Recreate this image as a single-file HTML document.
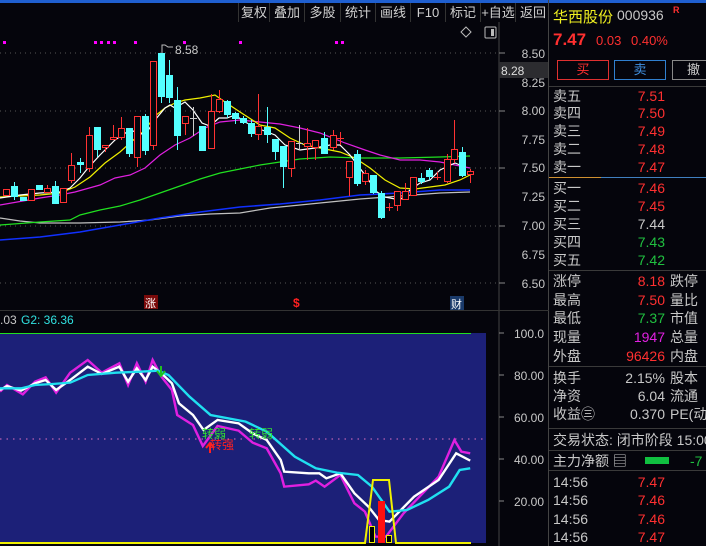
<!DOCTYPE html>
<html><head><meta charset="utf-8"><style>
*{margin:0;padding:0;box-sizing:border-box}
body{width:706px;height:546px;background:#05050c;overflow:hidden;position:relative;font-family:"Liberation Sans","Noto Sans CJK SC",sans-serif;color:#c8c8c8}
.a{position:absolute;white-space:nowrap}
.tb{position:absolute;top:3px;height:19px;font-size:13px;line-height:19px;color:#d0d0d0;text-align:center;border-left:1px solid #333}
.r{color:#ff3030}.g{color:#20c040}.w{color:#c8c8c8}.m{color:#e020e0}
.lab{position:absolute;left:553px;font-size:14px;color:#c8c8c8;line-height:16px;white-space:nowrap}
.val{position:absolute;right:41px;font-size:14px;line-height:16px;text-align:right;white-space:nowrap}
.lab2{position:absolute;left:670px;font-size:14px;color:#c8c8c8;line-height:16px;white-space:nowrap}
.hl{position:absolute;left:549px;width:157px;height:1px;background:#3a3a3a}
</style></head><body>
<div class="a" style="left:0;top:0;width:706px;height:3px;background:#1f5fd0"></div>
<div class="tb" style="left:238px;width:31px">复权</div>
<div class="tb" style="left:269px;width:35px">叠加</div>
<div class="tb" style="left:304px;width:36px">多股</div>
<div class="tb" style="left:340px;width:35px">统计</div>
<div class="tb" style="left:375px;width:35px">画线</div>
<div class="tb" style="left:410px;width:35px">F10</div>
<div class="tb" style="left:445px;width:35px">标记</div>
<div class="tb" style="left:480px;width:35px">+自选</div>
<div class="tb" style="left:515px;width:35px">返回</div>

<svg class="a" style="left:0;top:0" width="549" height="546">
<line x1="499" y1="22" x2="499" y2="546" stroke="#444" />
<line x1="548.5" y1="0" x2="548.5" y2="546" stroke="#444"/>
<line x1="0" y1="310.5" x2="549" y2="310.5" stroke="#333"/>
<g stroke="#555" stroke-dasharray="1,4">
<line x1="0" y1="53" x2="499" y2="53"/><line x1="0" y1="111" x2="499" y2="111"/><line x1="0" y1="168" x2="499" y2="168"/><line x1="0" y1="226" x2="499" y2="226"/><line x1="0" y1="283" x2="499" y2="283"/>
</g>
<g stroke="#888"><line x1="499" y1="53" x2="505" y2="53"/><line x1="499" y1="111" x2="505" y2="111"/><line x1="499" y1="168" x2="505" y2="168"/><line x1="499" y1="226" x2="505" y2="226"/><line x1="499" y1="283" x2="505" y2="283"/></g>
<g fill="#ff00ff">
<rect x="3" y="41" width="3" height="3"/><rect x="94" y="41" width="3" height="3"/><rect x="100" y="41" width="3" height="3"/><rect x="107" y="41" width="3" height="3"/><rect x="113" y="41" width="3" height="3"/><rect x="134" y="41" width="3" height="3"/><rect x="183" y="41" width="3" height="3"/><rect x="239" y="41" width="3" height="3"/><rect x="335" y="41" width="3" height="3"/><rect x="341" y="41" width="3" height="3"/>
</g>
<path d="M466 27 l5 5 l-5 5 l-5 -5z" fill="none" stroke="#bbb"/>
<rect x="485" y="27" width="11" height="11" fill="none" stroke="#bbb" rx="1"/><rect x="491" y="29" width="3" height="7" fill="#bbb"/>
<path d="M162 53 v-8 h3 l3 2 h5" fill="none" stroke="#bbb"/>
<text x="175" y="54" font-size="12" fill="#c8c8c8" font-family="Liberation Sans">8.58</text>
<g font-size="12" fill="#c8c8c8" font-family="Liberation Sans" text-anchor="end">
<text x="545" y="58">8.50</text><text x="545" y="87">8.25</text><text x="545" y="115">8.00</text><text x="545" y="144">7.75</text><text x="545" y="172">7.50</text><text x="545" y="201">7.25</text><text x="545" y="230">7.00</text><text x="545" y="259">6.75</text><text x="545" y="288">6.50</text>
</g>
<rect x="499" y="62" width="49" height="16" fill="#2c2c30"/>
<text x="501" y="75" font-size="12" fill="#ddd" font-family="Liberation Sans">8.28</text>
<g fill="none" stroke-width="1.2">
<polyline stroke="#c0c0c0" points="0,218 20,221 40,223 80,223 120,222 150,220 180,216 210,214 240,213 270,208 300,205 330,202 360,199 400,196 440,193 470,192"/>
<polyline stroke="#1030ff" stroke-width="1.6" points="0,240 40,237 80,232 120,225 160,218 200,212 240,207 280,204 320,200 360,195 400,193 440,190 470,190"/>
<polyline stroke="#20e020" points="0,225 40,222 70,220 80,215 100,210 120,206 140,200 160,193 180,186 200,179 220,173 240,169 260,165 280,162 300,159 330,157 360,158 400,158 440,157 470,156"/>
<polyline stroke="#e020e0" points="0,205 40,198 60,195 75,192 100,185 115,178 130,175 145,168 160,155 175,145 190,138 205,128 220,122 240,120 260,122 280,124 300,128 320,133 345,143 365,150 380,155 400,160 420,160 440,162 460,166 470,168"/>
<polyline stroke="#f0f000" points="0,197 40,195 60,193 75,187 90,177 105,163 120,152 130,143 145,130 155,116 165,108 175,103 185,100 200,98 215,95 225,102 240,112 260,125 275,128 290,138 305,145 320,148 340,152 355,158 370,168 385,180 400,188 415,189 430,187 445,185 460,180 470,175"/>
<polyline stroke="#ffffff" points="0,198 20,195 40,193 60,192 70,188 80,178 88,168 100,155 115,140 130,130 145,135 155,120 165,108 170,105 175,108 185,102 193,110 202,123 210,126 219,118 227,118 235,115 245,122 255,127 262,130 275,135 285,145 300,150 315,148 330,145 340,145 350,155 365,175 377,192 385,197 400,200 410,190 420,183 430,180 440,170 455,163 465,167"/>
</g>
<g stroke-width="1">
<g stroke="#ff3232" fill="#05050c">
<rect x="3.5" y="189.5" width="6" height="6"/>
<rect x="28.5" y="189.5" width="6" height="11"/>
<line x1="47.5" y1="185" x2="47.5" y2="188"/><rect x="44.5" y="188.5" width="6" height="4"/>
<rect x="60.5" y="188.5" width="6" height="14"/>
<line x1="71.5" y1="153" x2="71.5" y2="183"/><rect x="68.5" y="165.5" width="6" height="15"/>
<line x1="89.5" y1="127" x2="89.5" y2="172"/><rect x="86.5" y="135.5" width="6" height="33"/>
<line x1="105.5" y1="145" x2="105.5" y2="152"/><rect x="102.5" y="145.5" width="6" height="2"/>
<line x1="113.5" y1="125" x2="113.5" y2="140"/><rect x="110.5" y="137.5" width="6" height="2"/>
<line x1="121.5" y1="117" x2="121.5" y2="140"/><rect x="118.5" y="128.5" width="6" height="9"/>
<line x1="137.5" y1="116" x2="137.5" y2="167"/><rect x="134.5" y="116.5" width="6" height="41"/>
<line x1="153.5" y1="61" x2="153.5" y2="150"/><rect x="150.5" y="61.5" width="6" height="84"/>
<line x1="185.5" y1="116" x2="185.5" y2="135"/><rect x="182.5" y="116.5" width="6" height="7"/>
<line x1="211.5" y1="94" x2="211.5" y2="148"/><rect x="208.5" y="111.5" width="6" height="37"/>
<line x1="219.5" y1="90" x2="219.5" y2="113"/><rect x="216.5" y="99.5" width="6" height="12"/>
<line x1="258.5" y1="94" x2="258.5" y2="140"/><rect x="255.5" y="126.5" width="6" height="8"/>
<line x1="291.5" y1="141" x2="291.5" y2="177"/><rect x="288.5" y="141.5" width="6" height="27"/>
<line x1="307.5" y1="128" x2="307.5" y2="160"/><rect x="304.5" y="143.5" width="6" height="3"/>
<line x1="315.5" y1="140" x2="315.5" y2="160"/><rect x="312.5" y="140.5" width="6" height="7"/>
<line x1="333.5" y1="130" x2="333.5" y2="150"/><rect x="330.5" y="135.5" width="6" height="12"/>
<line x1="340.5" y1="132" x2="340.5" y2="145"/><line x1="337" y1="138.5" x2="344" y2="138.5"/>
<line x1="349.5" y1="161" x2="349.5" y2="196"/><rect x="346.5" y="161.5" width="6" height="16"/>
<line x1="365.5" y1="170" x2="365.5" y2="185"/><rect x="362.5" y="173.5" width="6" height="8"/>
<line x1="389.5" y1="203" x2="389.5" y2="211"/><line x1="386" y1="207.5" x2="393" y2="207.5"/>
<line x1="397.5" y1="191" x2="397.5" y2="211"/><rect x="394.5" y="191.5" width="6" height="14"/>
<line x1="405.5" y1="183" x2="405.5" y2="200"/><rect x="402.5" y="191.5" width="6" height="8"/>
<rect x="410.5" y="177.5" width="6" height="18"/>
<line x1="437.5" y1="172" x2="437.5" y2="180"/><line x1="434" y1="177.5" x2="441" y2="177.5"/>
<line x1="447.5" y1="154" x2="447.5" y2="183"/><rect x="444.5" y="159.5" width="6" height="22"/>
<line x1="454.5" y1="120" x2="454.5" y2="163"/><rect x="451.5" y="149.5" width="6" height="10"/>
<line x1="470.5" y1="169" x2="470.5" y2="183"/><rect x="467.5" y="171.5" width="6" height="3"/>
</g>
<g stroke="#54ffff" fill="#54ffff">
<line x1="14.5" y1="182" x2="14.5" y2="200"/><rect x="11.5" y="186.5" width="6" height="10"/>
<rect x="20.5" y="197.5" width="6" height="3"/>
<rect x="36.5" y="185.5" width="6" height="4"/>
<line x1="55.5" y1="181" x2="55.5" y2="204"/><rect x="52.5" y="186.5" width="6" height="17"/>
<line x1="80.5" y1="158" x2="80.5" y2="173"/><rect x="77.5" y="162.5" width="6" height="2"/>
<line x1="97.5" y1="127" x2="97.5" y2="157"/><rect x="94.5" y="127.5" width="6" height="22"/>
<line x1="129.5" y1="128" x2="129.5" y2="157"/><rect x="126.5" y="128.5" width="6" height="25"/>
<line x1="145.5" y1="114" x2="145.5" y2="155"/><rect x="142.5" y="116.5" width="6" height="34"/>
<line x1="161.5" y1="53" x2="161.5" y2="103"/><rect x="158.5" y="53.5" width="6" height="43"/>
<line x1="169.5" y1="60" x2="169.5" y2="103"/><rect x="166.5" y="75.5" width="6" height="22"/>
<line x1="177.5" y1="87" x2="177.5" y2="150"/><rect x="174.5" y="100.5" width="6" height="35"/>
<line x1="202.5" y1="126" x2="202.5" y2="151"/><rect x="199.5" y="126.5" width="6" height="24"/>
<line x1="227.5" y1="100" x2="227.5" y2="118"/><rect x="224.5" y="101.5" width="6" height="13"/>
<line x1="235.5" y1="112" x2="235.5" y2="124"/><rect x="232.5" y="113.5" width="6" height="5"/>
<line x1="243.5" y1="116" x2="243.5" y2="124"/><rect x="240.5" y="118.5" width="6" height="4"/>
<line x1="251.5" y1="120" x2="251.5" y2="137"/><rect x="248.5" y="123.5" width="6" height="10"/>
<line x1="267.5" y1="107" x2="267.5" y2="143"/><rect x="264.5" y="127.5" width="6" height="7"/>
<line x1="275.5" y1="139" x2="275.5" y2="160"/><rect x="272.5" y="139.5" width="6" height="12"/>
<line x1="283.5" y1="146" x2="283.5" y2="188"/><rect x="280.5" y="146.5" width="6" height="20"/>
<line x1="324.5" y1="132" x2="324.5" y2="154"/><rect x="321.5" y="138.5" width="6" height="15"/>
<line x1="357.5" y1="150" x2="357.5" y2="186"/><rect x="354.5" y="154.5" width="6" height="29"/>
<line x1="373.5" y1="175" x2="373.5" y2="194"/><rect x="370.5" y="175.5" width="6" height="17"/>
<line x1="381.5" y1="191" x2="381.5" y2="219"/><rect x="378.5" y="193.5" width="6" height="24"/>
<line x1="421.5" y1="173" x2="421.5" y2="184"/><rect x="418.5" y="178.5" width="6" height="3"/>
<line x1="429.5" y1="168" x2="429.5" y2="180"/><rect x="426.5" y="170.5" width="6" height="6"/>
<line x1="462.5" y1="147" x2="462.5" y2="177"/><rect x="459.5" y="152.5" width="6" height="23"/>
</g>
<g stroke="#ccc"><line x1="193.5" y1="107" x2="193.5" y2="136"/><line x1="190" y1="118.5" x2="197" y2="118.5"/><line x1="299.5" y1="125" x2="299.5" y2="150"/><line x1="296" y1="143.5" x2="303" y2="143.5"/></g>
</g>
<rect x="144" y="295" width="14" height="14" fill="#7a0a0a"/>
<text x="145" y="307" font-size="11" fill="#fff">涨</text>
<text x="293" y="307" font-size="12" fill="#ff2020" font-weight="bold">$</text>
<rect x="450" y="296" width="14" height="14" fill="#1a3a6a"/>
<text x="451" y="308" font-size="11" fill="#fff">财</text>
<text x="0" y="324" font-size="12" fill="#c8c8c8">.03</text>
<text x="21" y="324" font-size="12" fill="#30e0e0">G2: 36.36</text>
<rect x="0" y="333" width="486" height="210" fill="#1c2078"/>
<line x1="0" y1="333.5" x2="471" y2="333.5" stroke="#20e020"/>
<line x1="0" y1="439" x2="486" y2="439" stroke="#e070c0" stroke-dasharray="1.5,5"/>
<g font-size="12" fill="#c8c8c8" font-family="Liberation Sans" text-anchor="end">
<text x="544" y="338">100.0</text><text x="544" y="380">80.00</text><text x="544" y="422">60.00</text><text x="544" y="464">40.00</text><text x="544" y="506">20.00</text>
</g>
<g stroke="#888"><line x1="499" y1="333" x2="504" y2="333"/><line x1="499" y1="375" x2="504" y2="375"/><line x1="499" y1="417" x2="504" y2="417"/><line x1="499" y1="459" x2="504" y2="459"/><line x1="499" y1="501" x2="504" y2="501"/></g>
<g fill="none" stroke-width="2" transform="translate(0,300) scale(0.3509,0.3333)">
<polyline stroke="#e020e0" stroke-width="7" points="0,275 20,255 65,283 100,245 130,232 160,278 200,218 250,180 290,218 340,190 365,255 390,190 415,245 435,180 460,230 490,270 505,345 550,375 578,438 620,378 680,392 720,428 760,445 800,520 810,560 880,553 900,542 925,560 970,525 1010,610 1040,635 1070,710 1100,710 1150,640 1250,530 1295,420 1315,455 1340,460"/>
<polyline stroke="#ffffff" stroke-width="7" points="0,270 20,258 60,272 100,250 130,240 160,270 200,240 250,200 290,222 340,200 365,245 390,205 415,240 435,200 460,220 490,250 510,310 550,345 580,390 620,360 680,370 720,400 760,420 800,480 810,515 880,520 910,520 930,535 970,520 1010,580 1050,620 1080,660 1110,665 1180,590 1250,540 1300,460 1340,482"/>
<polyline stroke="#20e0f0" stroke-width="7" points="0,265 60,265 100,255 150,252 200,248 250,225 330,218 400,215 450,212 480,225 540,290 600,345 700,365 760,395 840,470 900,505 960,518 1020,525 1060,560 1110,635 1160,630 1220,600 1280,560 1310,510 1340,505"/>
</g>
<polyline fill="none" stroke="#f0f000" stroke-width="2" points="0,543 365,543 373,480 389,480 396,543 471,543"/>
<rect x="378" y="501" width="7" height="42" fill="#ff1010"/>
<rect x="369.5" y="526.5" width="5" height="16" fill="#000" stroke="#f0f000"/>
<rect x="386.5" y="535.5" width="5" height="7" fill="#000" stroke="#f0f000"/>
<path d="M161 366 v9 M157 371 l4 5 l4 -5" stroke="#20c020" stroke-width="2" fill="none"/>
<path d="M210 453 v-9 M206 448 l4 -5 l4 5" stroke="#ff2020" stroke-width="2" fill="none"/>
<text x="202" y="438" font-size="12" fill="#30e030">转弱</text>
<text x="249" y="438" font-size="12" fill="#30e030">转弱</text>
<text x="210" y="449" font-size="12" fill="#ff2020">转强</text>
</svg>

<div class="a" style="left:553px;top:6px;font-size:15px;color:#f0f020">华西股份</div>
<div class="a" style="left:617px;top:7px;font-size:14px;color:#c8c8c8">000936</div>
<div class="a" style="left:673px;top:5px;font-size:9px;color:#ff3030;font-weight:bold">R</div>
<div class="a" style="left:553px;top:30px;font-size:17px;color:#ff3030;font-weight:bold">7.47</div>
<div class="a" style="left:596px;top:33px;font-size:13px;color:#ff3030">0.03</div>
<div class="a" style="left:631px;top:33px;font-size:13px;color:#ff3030">0.40%</div>
<div class="a" style="left:557px;top:60px;width:52px;height:20px;border:1px solid #e03030;color:#ff3030;font-size:13px;text-align:center;line-height:18px">买</div>
<div class="a" style="left:614px;top:60px;width:52px;height:20px;border:1px solid #3080d0;color:#4090e0;font-size:13px;text-align:center;line-height:18px">卖</div>
<div class="a" style="left:672px;top:60px;width:40px;height:20px;border:1px solid #888;color:#ccc;font-size:13px;text-align:left;padding-left:14px;line-height:18px">撤</div>
<div class="hl" style="top:86px"></div>
<div class="lab" style="top:88px">卖五</div><div class="val r" style="top:88px">7.51</div>
<div class="lab" style="top:105px">卖四</div><div class="val r" style="top:105px">7.50</div>
<div class="lab" style="top:123px">卖三</div><div class="val r" style="top:123px">7.49</div>
<div class="lab" style="top:141px">卖二</div><div class="val r" style="top:141px">7.48</div>
<div class="lab" style="top:159px">卖一</div><div class="val r" style="top:159px">7.47</div>
<div class="a" style="left:549px;top:177px;width:52px;height:1px;background:#d09030"></div>
<div class="a" style="left:601px;top:177px;width:105px;height:1px;background:#4080c0"></div>
<div class="lab" style="top:180px">买一</div><div class="val r" style="top:180px">7.46</div>
<div class="lab" style="top:198px">买二</div><div class="val r" style="top:198px">7.45</div>
<div class="lab" style="top:216px">买三</div><div class="val w" style="top:216px">7.44</div>
<div class="lab" style="top:234px">买四</div><div class="val g" style="top:234px">7.43</div>
<div class="lab" style="top:252px">买五</div><div class="val g" style="top:252px">7.42</div>
<div class="hl" style="top:270px"></div>
<div class="lab" style="top:273px">涨停</div><div class="val r" style="top:273px">8.18</div><div class="lab2" style="top:273px">跌停</div>
<div class="lab" style="top:292px">最高</div><div class="val r" style="top:292px">7.50</div><div class="lab2" style="top:292px">量比</div>
<div class="lab" style="top:310px">最低</div><div class="val g" style="top:310px">7.37</div><div class="lab2" style="top:310px">市值</div>
<div class="lab" style="top:329px">现量</div><div class="val m" style="top:329px">1947</div><div class="lab2" style="top:329px">总量</div>
<div class="lab" style="top:348px">外盘</div><div class="val r" style="top:348px">96426</div><div class="lab2" style="top:348px">内盘</div>
<div class="hl" style="top:366px"></div>
<div class="lab" style="top:370px">换手</div><div class="val w" style="top:370px">2.15%</div><div class="lab2" style="top:370px">股本</div>
<div class="lab" style="top:388px">净资</div><div class="val w" style="top:388px">6.04</div><div class="lab2" style="top:388px">流通</div>
<div class="lab" style="top:406px">收益㊂</div><div class="val w" style="top:406px">0.370</div><div class="lab2" style="top:406px">PE(动</div>
<div class="hl" style="top:428px"></div>
<div class="lab" style="top:432px">交易状态: 闭市阶段 15:00</div>
<div class="hl" style="top:450px"></div>
<div class="lab" style="top:453px">主力净额 ▤</div>
<div class="a" style="left:645px;top:457px;width:24px;height:7px;background:#10c040"></div>
<div class="a" style="left:690px;top:453px;font-size:14px;color:#20c040">-7</div>
<div class="hl" style="top:470px"></div>
<div class="lab" style="top:474px">14:56</div><div class="val r" style="top:474px">7.47</div>
<div class="lab" style="top:492px">14:56</div><div class="val r" style="top:492px">7.46</div>
<div class="lab" style="top:511px">14:56</div><div class="val r" style="top:511px">7.46</div>
<div class="lab" style="top:529px">14:56</div><div class="val r" style="top:529px">7.47</div>
</body></html>
